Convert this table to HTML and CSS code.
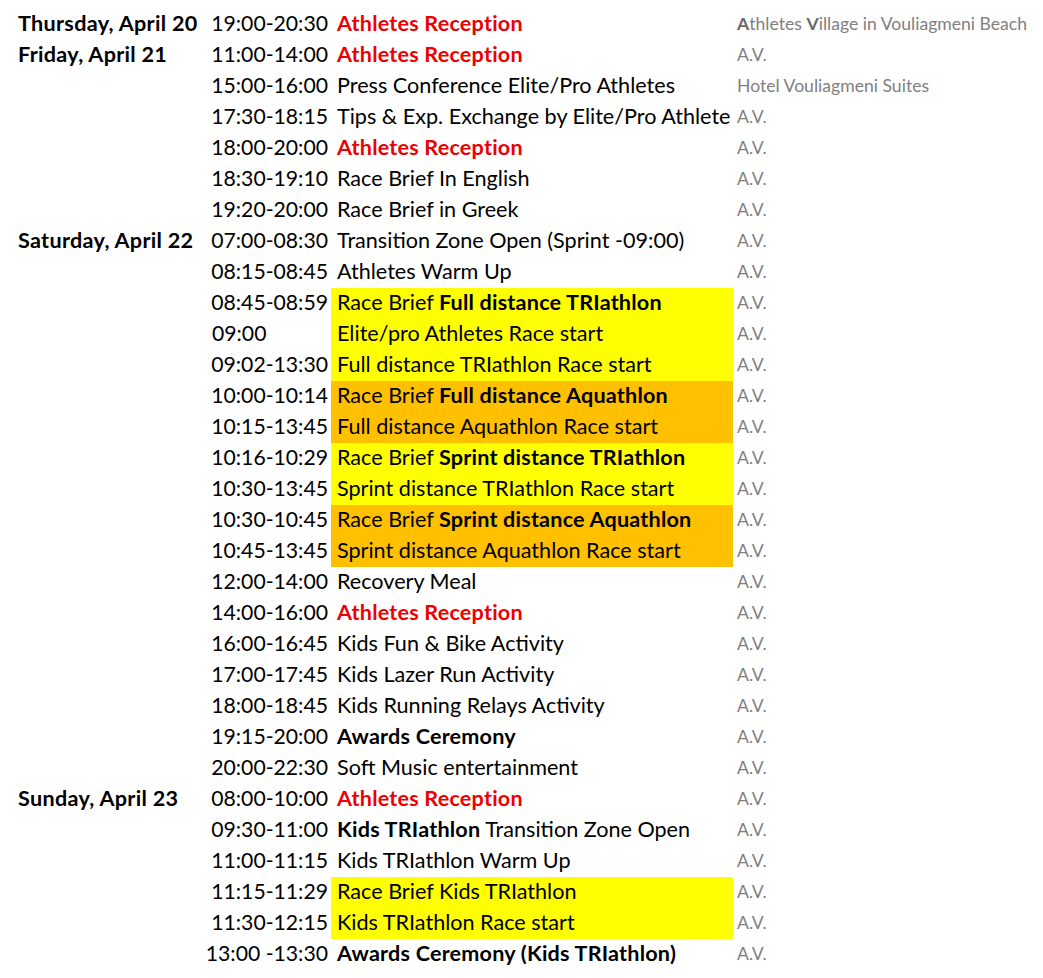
FILE: index.html
```html
<!DOCTYPE html>
<html>
<head>
<meta charset="utf-8">
<link rel="stylesheet" href="styles.css">
</head>
<body>
<div class="sched">
  <div class="row"><div class="day">Thursday, April 20</div><div class="time">19:00-20:30</div><div class="ev red">Athletes Reception</div><div class="loc"><b>A</b>thletes <b>V</b>illage in Vouliagmeni Beach</div></div>
  <div class="row"><div class="day">Friday, April 21</div><div class="time">11:00-14:00</div><div class="ev red">Athletes Reception</div><div class="loc">A.V.</div></div>
  <div class="row"><div class="day"></div><div class="time">15:00-16:00</div><div class="ev">Press Conference Elite/Pro Athletes</div><div class="loc">Hotel Vouliagmeni Suites</div></div>
  <div class="row"><div class="day"></div><div class="time">17:30-18:15</div><div class="ev">Tips &amp; Exp. Exchange by Elite/Pro Athlete</div><div class="loc">A.V.</div></div>
  <div class="row"><div class="day"></div><div class="time">18:00-20:00</div><div class="ev red">Athletes Reception</div><div class="loc">A.V.</div></div>
  <div class="row"><div class="day"></div><div class="time">18:30-19:10</div><div class="ev">Race Brief In English</div><div class="loc">A.V.</div></div>
  <div class="row"><div class="day"></div><div class="time">19:20-20:00</div><div class="ev">Race Brief in Greek</div><div class="loc">A.V.</div></div>
  <div class="row"><div class="day">Saturday, April 22</div><div class="time">07:00-08:30</div><div class="ev">Transition Zone Open (Sprint -09:00)</div><div class="loc">A.V.</div></div>
  <div class="row"><div class="day"></div><div class="time">08:15-08:45</div><div class="ev">Athletes Warm Up</div><div class="loc">A.V.</div></div>
  <div class="row"><div class="day"></div><div class="time">08:45-08:59</div><div class="ev yellow">Race Brief <b>Full distance TRIathlon</b></div><div class="loc">A.V.</div></div>
  <div class="row"><div class="day"></div><div class="time left">09:00</div><div class="ev yellow">Elite/pro Athletes Race start</div><div class="loc">A.V.</div></div>
  <div class="row"><div class="day"></div><div class="time">09:02-13:30</div><div class="ev yellow">Full distance TRIathlon Race start</div><div class="loc">A.V.</div></div>
  <div class="row"><div class="day"></div><div class="time">10:00-10:14</div><div class="ev orange">Race Brief <b>Full distance Aquathlon</b></div><div class="loc">A.V.</div></div>
  <div class="row"><div class="day"></div><div class="time">10:15-13:45</div><div class="ev orange">Full distance Aquathlon Race start</div><div class="loc">A.V.</div></div>
  <div class="row"><div class="day"></div><div class="time">10:16-10:29</div><div class="ev yellow">Race Brief <b>Sprint distance TRIathlon</b></div><div class="loc">A.V.</div></div>
  <div class="row"><div class="day"></div><div class="time">10:30-13:45</div><div class="ev yellow">Sprint distance TRIathlon Race start</div><div class="loc">A.V.</div></div>
  <div class="row"><div class="day"></div><div class="time">10:30-10:45</div><div class="ev orange">Race Brief <b>Sprint distance Aquathlon</b></div><div class="loc">A.V.</div></div>
  <div class="row"><div class="day"></div><div class="time">10:45-13:45</div><div class="ev orange">Sprint distance Aquathlon Race start</div><div class="loc">A.V.</div></div>
  <div class="row"><div class="day"></div><div class="time">12:00-14:00</div><div class="ev">Recovery Meal</div><div class="loc">A.V.</div></div>
  <div class="row"><div class="day"></div><div class="time">14:00-16:00</div><div class="ev red">Athletes Reception</div><div class="loc">A.V.</div></div>
  <div class="row"><div class="day"></div><div class="time">16:00-16:45</div><div class="ev">Kids Fun &amp; Bike Activity</div><div class="loc">A.V.</div></div>
  <div class="row"><div class="day"></div><div class="time">17:00-17:45</div><div class="ev">Kids Lazer Run Activity</div><div class="loc">A.V.</div></div>
  <div class="row"><div class="day"></div><div class="time">18:00-18:45</div><div class="ev">Kids Running Relays Activity</div><div class="loc">A.V.</div></div>
  <div class="row"><div class="day"></div><div class="time">19:15-20:00</div><div class="ev"><b>Awards Ceremony</b></div><div class="loc">A.V.</div></div>
  <div class="row"><div class="day"></div><div class="time">20:00-22:30</div><div class="ev">Soft Music entertainment</div><div class="loc">A.V.</div></div>
  <div class="row"><div class="day">Sunday, April 23</div><div class="time">08:00-10:00</div><div class="ev red">Athletes Reception</div><div class="loc">A.V.</div></div>
  <div class="row"><div class="day"></div><div class="time">09:30-11:00</div><div class="ev"><b>Kids TRIathlon</b> Transition Zone Open</div><div class="loc">A.V.</div></div>
  <div class="row"><div class="day"></div><div class="time">11:00-11:15</div><div class="ev">Kids TRIathlon Warm Up</div><div class="loc">A.V.</div></div>
  <div class="row"><div class="day"></div><div class="time">11:15-11:29</div><div class="ev yellow">Race Brief Kids TRIathlon</div><div class="loc">A.V.</div></div>
  <div class="row"><div class="day"></div><div class="time">11:30-12:15</div><div class="ev yellow">Kids TRIathlon Race start</div><div class="loc">A.V.</div></div>
  <div class="row"><div class="day"></div><div class="time">13:00 -13:30</div><div class="ev"><b>Awards Ceremony (Kids TRIathlon)</b></div><div class="loc">A.V.</div></div>
</div>
</body>
</html>
```

FILE: styles.css
```css
html, body {
  margin: 0;
  padding: 0;
  background: #ffffff;
}
body {
  padding: 9px 0 0 8px;
  font-family: Lato, "Open Sans", sans-serif;
  color: #000000;
}
.sched {
  display: flex;
  flex-direction: column;
}
.row {
  display: grid;
  grid-template-columns: 197px 126px 402px 310px;
  height: 31px;
}
.row > div {
  line-height: 29px;
  white-space: nowrap;
  overflow: visible;
}
.day {
  padding-left: 10px;
  font-weight: 700;
  font-size: 21.6px;
  letter-spacing: 0.3px;
}
.time {
  text-align: right;
  padding-right: 3px;
  font-size: 21.2px;
}
.time.left {
  text-align: left;
  padding-left: 7px;
  padding-right: 0;
}
.ev {
  padding-left: 6px;
  font-size: 21.6px;
}
.ev b {
  font-weight: 700;
  letter-spacing: 0.2px;
}
.red {
  color: #ee0000;
  font-weight: 700;
  letter-spacing: 0.2px;
}
.yellow { background: #ffff00; }
.orange { background: #ffc000; }
.loc {
  padding-left: 4px;
  font-size: 17.6px;
  color: #7f7f7f;
}
.loc b { font-weight: 700; color: #6a6a6a; }
```
